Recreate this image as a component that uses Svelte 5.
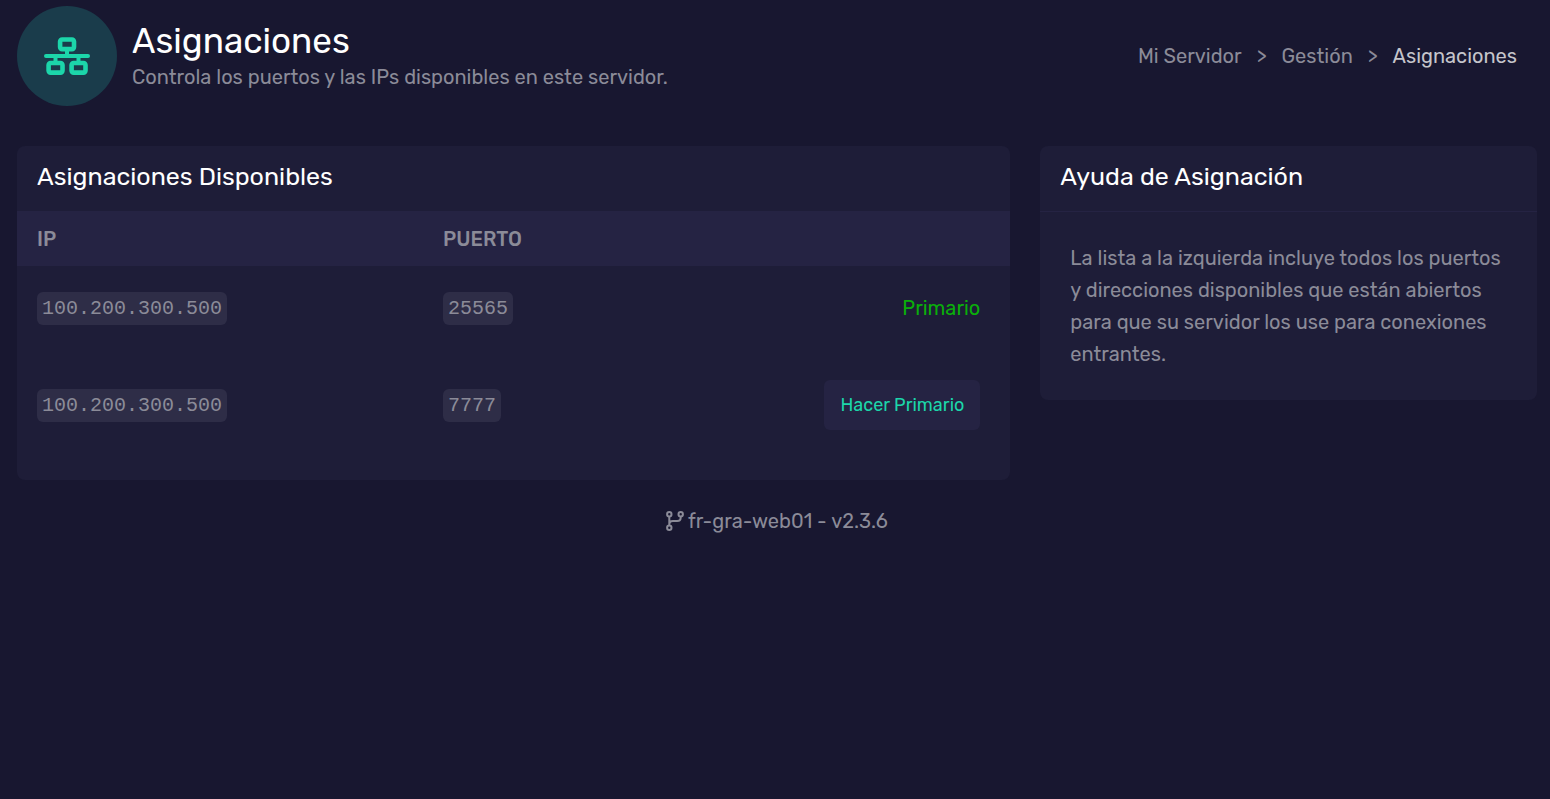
<script lang="ts">
  type Allocation = { ip: string; port: number; primary: boolean };

  let allocations: Allocation[] = $state([
    { ip: '100.200.300.500', port: 25565, primary: true },
    { ip: '100.200.300.500', port: 7777, primary: false },
  ]);

  function makePrimary(port: number) {
    for (const a of allocations) a.primary = a.port === port;
  }
</script>

<div class="page">
  <header class="header">
    <div class="badge">
      <svg viewBox="0 0 46 38" width="46" height="38" aria-hidden="true">
        <g fill="none" stroke="currentColor" stroke-width="4" stroke-linecap="round">
          <rect x="16.100" y="2.500" width="13.900" height="9.600" rx="2" stroke-width="4.600" />
          <rect x="4.600" y="26" width="13.900" height="9.600" rx="2" stroke-width="4.600" />
          <rect x="27.600" y="26" width="13.900" height="9.600" rx="2" stroke-width="4.600" />
          <path d="M2 19H44M23 14V19M11.500 19V24M34.500 19V24" />
        </g>
      </svg>
    </div>
    <div class="heading">
      <h1>Asignaciones</h1>
      <p>Controla los puertos y las IPs disponibles en este servidor.</p>
    </div>
    <nav aria-label="Ruta">
      <ol class="crumbs">
        <li><a href="#servidor">Mi Servidor</a></li>
        <li><a href="#gestion">Gestión</a></li>
        <li aria-current="page">Asignaciones</li>
      </ol>
    </nav>
  </header>

  <main class="columns">
    <section class="card list">
      <h2>Asignaciones Disponibles</h2>
      <table>
        <thead>
          <tr>
            <th class="col-ip">IP</th>
            <th>PUERTO</th>
            <th></th>
          </tr>
        </thead>
        <tbody>
          {#each allocations as a (a.port)}
            <tr>
              <td><code>{a.ip}</code></td>
              <td><code>{a.port}</code></td>
              <td class="action">
                {#if a.primary}
                  <span class="primary">Primario</span>
                {:else}
                  <button onclick={() => makePrimary(a.port)}>Hacer Primario</button>
                {/if}
              </td>
            </tr>
          {/each}
        </tbody>
      </table>
    </section>

    <section class="card">
      <h2 class="ruled">Ayuda de Asignación</h2>
      <p class="help">
        La lista a la izquierda incluye todos los puertos y direcciones disponibles que están
        abiertos para que su servidor los use para conexiones entrantes.
      </p>
    </section>
  </main>

  <footer>
    <svg viewBox="0 0 18 20" width="18" height="20" aria-hidden="true">
      <g fill="none" stroke="currentColor" stroke-width="2">
        <circle cx="3.300" cy="3.300" r="2.200" />
        <circle cx="3.300" cy="16.700" r="2.200" />
        <circle cx="14.700" cy="3.300" r="2.200" />
        <path d="M3.300 5.500V14.500M14.700 5.500V6.500Q14.700 10 11.200 10H6.800Q3.300 10 3.300 13" />
      </g>
    </svg>
    fr-gra-web01 - v2.3.6
  </footer>
</div>

<style>
  :global(body) {
    margin: 0;
    background: #181730;
  }

  .page {
    padding: 6px 13px 0 17px;
    font-family: Rubik, Roboto, sans-serif;
    font-size: 20px;
    line-height: 32px;
    color: #8b8b98;
  }

  h1,
  h2,
  p {
    margin: 0;
    font-weight: 400;
  }

  .header {
    display: flex;
    align-items: center;
    gap: 15px;
    margin-bottom: 40px;
  }

  .badge {
    width: 100px;
    height: 100px;
    flex: none;
    border-radius: 50%;
    background: #1a3c4b;
    color: #1cd6aa;
    display: flex;
    align-items: center;
    justify-content: center;
  }

  .heading {
    flex: 1;
  }

  h1 {
    padding-top: 2px;
    font-size: 35px;
    line-height: 40px;
    color: #fff;
  }

  .crumbs {
    display: flex;
    list-style: none;
    margin: 0;
    padding: 0 20px 0 0;
  }

  .crumbs li + li::before {
    content: '>';
    padding: 0 15px;
    color: #8b8b98;
  }

  .crumbs a {
    color: inherit;
    text-decoration: none;
  }

  .crumbs a:hover {
    color: #fff;
  }

  .crumbs [aria-current] {
    color: #c5c5cb;
  }

  .columns {
    display: grid;
    grid-template-columns: 2fr 1fr;
    align-items: start;
    gap: 30px;
  }

  .card {
    border-radius: 8px;
    background: #1e1d38;
    overflow: hidden;
  }

  .list {
    padding-bottom: 20px;
  }

  h2 {
    padding: 16px 20px 19px;
    font-size: 25px;
    line-height: 30px;
    color: #fff;
  }

  .ruled {
    border-bottom: 1px solid #252343;
  }

  .help {
    padding: 30px;
  }

  table {
    width: 100%;
    table-layout: fixed;
    border-collapse: collapse;
    line-height: 25px;
  }

  th {
    padding: 16px 20px 14px;
    text-align: left;
    font-weight: 500;
    background: #252343;
  }

  .col-ip {
    width: 366px;
  }

  td {
    padding: 29px 20px 30px;
    line-height: 24px;
  }

  code {
    padding: 5px;
    border-radius: 6px;
    background: #2e2d47;
    font-family: 'Liberation Mono', monospace;
    font-size: 20px;
  }

  .action {
    padding-right: 30px;
    text-align: right;
  }

  .primary {
    color: #0aaf0a;
  }

  button {
    display: block;
    height: 50px;
    margin-left: auto;
    padding: 0 16px;
    border: none;
    border-radius: 6px;
    background: #252343;
    color: #1cd6aa;
    font-family: inherit;
    font-size: 18px;
    cursor: pointer;
  }

  button:hover {
    background: #2e2d47;
  }

  footer {
    display: flex;
    align-items: center;
    justify-content: center;
    gap: 4px;
    padding: 25px 0;
  }
</style>
